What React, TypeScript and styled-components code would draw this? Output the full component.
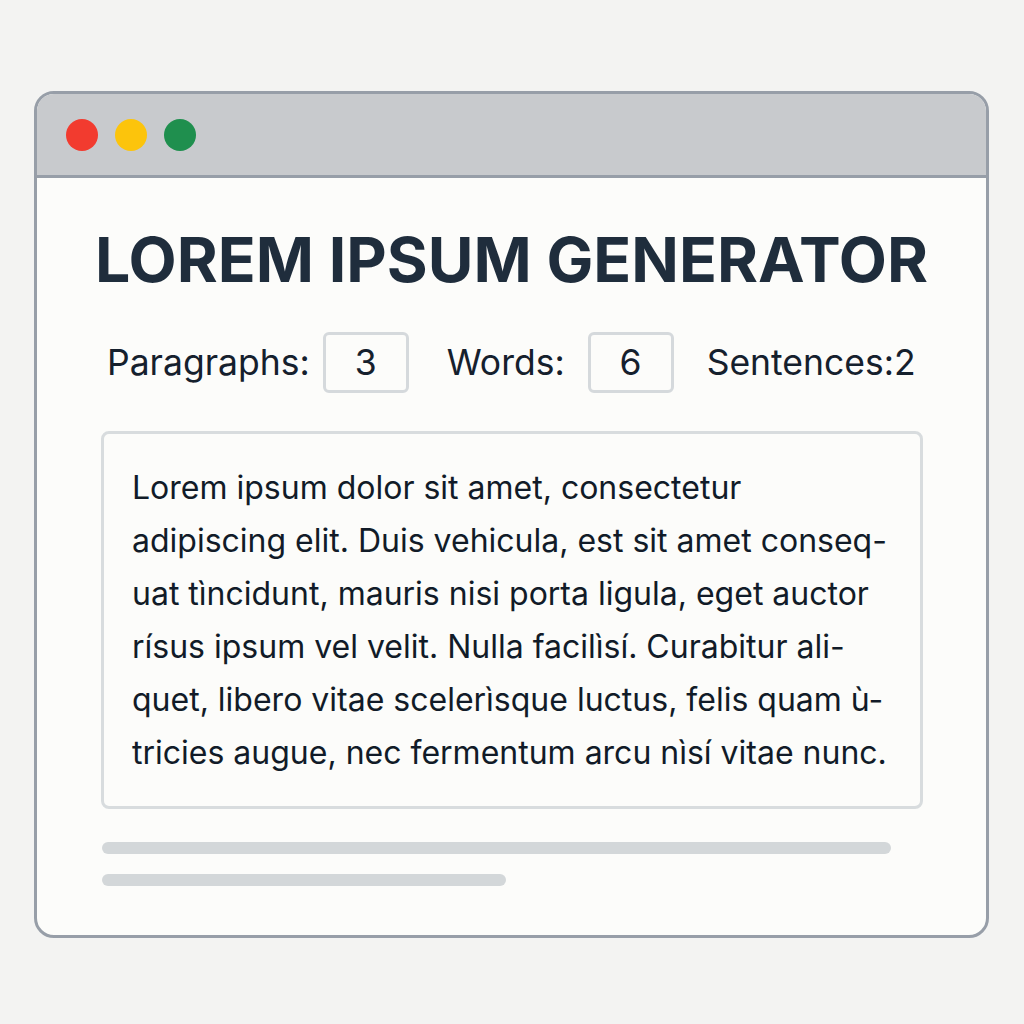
import React from 'react'
import styled, { createGlobalStyle } from 'styled-components'

const GlobalStyle = createGlobalStyle`
    html, body {
        margin: 0;
        padding: 0;
        background-color: #f3f3f2;
        font-family: Inter, "Noto Sans", "Liberation Sans", sans-serif;
    }
`;

const Page = styled.div`
    width: 1024px;
    height: 1024px;
    padding: 91px 0 0 34px;
    box-sizing: border-box;
`;

const Window = styled.div`
    width: 955px;
    height: 847px;
    box-sizing: border-box;
    border: 3px solid #979ea8;
    border-radius: 20px;
    background-color: #fcfcfa;
    overflow: hidden;
    display: flex;
    flex-direction: column;
`;

const TitleBar = styled.div`
    height: 84px;
    flex-shrink: 0;
    background-color: #c8cacd;
    border-bottom: 3px solid #979ea8;
    display: flex;
    align-items: center;
    gap: 17px;
    padding: 0 0 0 29px;
    box-sizing: border-box;
`;

const Dot = styled.div<{ color: string }>`
    width: 32px;
    height: 32px;
    border-radius: 50%;
    background-color: ${p => p.color};
    margin-top: 1px;
`;

const Content = styled.div`
    display: flex;
    flex-direction: column;
    padding: 0 64px 0 64px;
`;

const Title = styled.h1`
    margin: 42px -20px 0;
    text-align: center;
    font-size: 62.5px;
    font-weight: 700;
    line-height: 78px;
    color: #1f2d3c;
    white-space: nowrap;
`;

const Controls = styled.div`
    display: flex;
    align-items: center;
    margin: 33px 0 0 6px;
    height: 62px;
`;

const Label = styled.span<{ gap: number }>`
    font-size: 35.5px;
    color: #15202d;
    margin-right: ${p => p.gap}px;
`;

const NumBox = styled.div<{ after: number }>`
    width: 86px;
    height: 61px;
    box-sizing: border-box;
    border: 3px solid #d5d9dc;
    border-radius: 6px;
    display: flex;
    align-items: center;
    justify-content: center;
    font-size: 35.5px;
    color: #15202d;
    margin-right: ${p => p.after}px;
`;

const TextBox = styled.div`
    margin: 38px 0 0 0;
    width: 822px;
    height: 378px;
    box-sizing: border-box;
    border: 3px solid #d8dcde;
    border-radius: 8px;
    padding: 27px 0 0 28px;
`;

const Line = styled.div`
    font-size: 32px;
    line-height: 53px;
    color: #111b28;
    white-space: nowrap;
`;

const Bars = styled.div`
    display: flex;
    flex-direction: column;
    gap: 20px;
    margin: 33px 0 0 1px;
`;

const Bar = styled.div<{ w: number }>`
    width: ${p => p.w}px;
    height: 12px;
    border-radius: 6px;
    background-color: #d3d7d9;
`;

const lines = [
    'Lorem ipsum dolor sit amet, consectetur',
    'adipiscing elit. Duis vehicula, est sit amet conseq-',
    'uat tìncidunt, mauris nisi porta ligula, eget auctor',
    'rísus ipsum vel velit. Nulla facilìsí. Curabitur ali-',
    'quet, libero vitae scelerìsque luctus, felis quam ù-',
    'tricies augue, nec fermentum arcu nìsí vitae nunc.',
]

const App = () => {
    return (
        <Page>
            <GlobalStyle />
            <Window>
                <TitleBar>
                    <Dot color="#f23b2f" />
                    <Dot color="#fcc40c" />
                    <Dot color="#1f8f4e" />
                </TitleBar>
                <Content>
                    <Title>LOREM IPSUM GENERATOR</Title>
                    <Controls>
                        <Label gap={13}>Paragraphs:</Label>
                        <NumBox after={38}>3</NumBox>
                        <Label gap={23}>Words:</Label>
                        <NumBox after={33}>6</NumBox>
                        <Label gap={0}>Sentences:2</Label>
                    </Controls>
                    <TextBox>
                        {lines.map((l, i) => (
                            <Line key={i}>{l}</Line>
                        ))}
                    </TextBox>
                    <Bars>
                        <Bar w={789} />
                        <Bar w={404} />
                    </Bars>
                </Content>
            </Window>
        </Page>
    )
}

export default App
